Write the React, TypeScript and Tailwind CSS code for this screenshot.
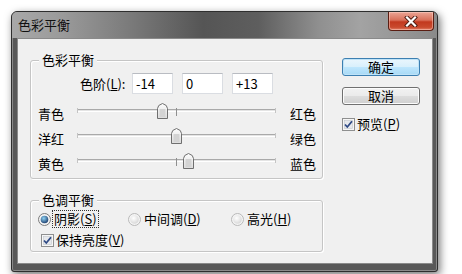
import React from "react";

const font = { fontFamily: '"Noto Sans CJK SC", "Noto Sans", sans-serif' };

interface SliderRowProps {
  left: string;
  right: string;
  value: number;
}

const SliderThumb = () => (
  <svg width="11" height="16" viewBox="0 0 11 16">
    <defs>
      <linearGradient id="thumbFill" x1="0" y1="0" x2="0" y2="1">
        <stop offset="0" stopColor="#fdfdfd" />
        <stop offset="1" stopColor="#dcdcdc" />
      </linearGradient>
    </defs>
    <path
      d="M0.5 15.5 V5.5 Q0.5 2 5.5 0.5 Q10.5 2 10.5 5.5 V15.5 Z"
      fill="url(#thumbFill)"
      stroke="#6f6f6f"
    />
    <rect x="2.5" y="6" width="6" height="8" fill="#d3d3d3" />
  </svg>
);

const SliderRow: React.FC<SliderRowProps> = ({ left, right, value }) => {
  const center = 99 + value * 0.94;
  return (
    <div className="flex h-[25px] items-center">
      <span className="w-[26px] whitespace-nowrap pt-[2px] text-[13px] leading-[16px]">{left}</span>
      <div className="relative ml-[13px] h-[25px] w-[199px]">
        <div className="absolute left-0 right-0 top-[9px] h-[3px] border-t border-b border-t-[#a9a9a9] border-b-white bg-[#e4e4e4]" />
        <div className="absolute left-0 top-[8px] h-[5px] w-px bg-[#c4c4c4]" />
        <div className="absolute right-0 top-[8px] h-[5px] w-px bg-[#c4c4c4]" />
        <div className="absolute left-[99px] top-[8px] h-[8px] w-px bg-[#8f8f8f]" />
        <div className="absolute top-[3px] flex" style={{ left: center - 5.5 }}>
          <SliderThumb />
        </div>
      </div>
      <span className="ml-[14px] w-[26px] whitespace-nowrap pt-[2px] text-[13px] leading-[16px]">{right}</span>
    </div>
  );
};

const Radio = ({ checked }: { checked: boolean }) => (
  <svg width="13" height="13" viewBox="0 0 13 13">
    <defs>
      <radialGradient id={checked ? "radOn" : "radOff"} cx="0.4" cy="0.35" r="0.7">
        <stop offset="0" stopColor={checked ? "#8fd3f5" : "#ffffff"} />
        <stop offset="1" stopColor={checked ? "#1a3a6a" : "#d6d6d6"} />
      </radialGradient>
    </defs>
    <circle cx="6.5" cy="6.5" r="6" fill="#f4f4f4" stroke={checked ? "#7c7c7c" : "#b8b8b8"} />
    <circle cx="6.5" cy="6.5" r={checked ? 3.8 : 4.3} fill={`url(#${checked ? "radOn" : "radOff"})`} />
  </svg>
);

const Check = () => (
  <svg width="13" height="13" viewBox="0 0 13 13">
    <rect x="0.5" y="0.5" width="12" height="12" fill="#f6f6f6" stroke="#8e8f8f" />
    <rect x="2.5" y="2.5" width="8" height="8" fill="#e6e8ec" stroke="#c2c6cc" strokeWidth="0.6" />
    <path d="M3 6.5 L5.3 9 L10 3.3" fill="none" stroke="#2f4a85" strokeWidth="1.8" />
  </svg>
);

const NumBox = ({ value }: { value: string }) => (
  <div className="flex h-[21px] w-[41px] items-center border border-[#dadde2] border-t-[#b9bcc2] bg-white pl-[3px] text-[13px] leading-[16px]">
    {value}
  </div>
);

export default function App() {
  return (
    <div className="min-h-screen bg-white pl-[11px] pt-[11px] text-black" style={font}>
      <div className="flex h-[261px] w-[427px] flex-col overflow-hidden rounded-t-[6px] rounded-b-[3px] border border-[#2e2e2e] bg-[#585858] shadow-[2px_3px_9px_rgba(0,0,0,0.55),inset_0_0_0_1px_rgba(255,255,255,0.3)]">
        {/* title bar */}
        <div className="flex h-[26px] shrink-0 justify-between bg-[linear-gradient(90deg,#a8a8a8_0%,#9a9a9a_12%,#7a7a7a_28%,#555555_45%,#5e5e5e_58%,#8f8f8f_72%,#a3a3a3_82%,#8a8a8a_100%)] pl-[6px] pr-[3px]">
          <span className="mt-[5px] text-[13px] leading-[16px] text-[#111]">色彩平衡</span>
          <div className="flex h-[19px] w-[46px] items-center justify-center rounded-b-[4px] border border-t-0 border-[#5a1d12] bg-[linear-gradient(180deg,#eba595_0%,#d9705a_45%,#c2391f_55%,#c94a2e_85%,#e3826a_100%)] shadow-[inset_0_0_0_1px_rgba(255,220,210,0.45)]">
            <svg width="14" height="11" viewBox="0 0 14 11">
              <path d="M3 1.5 L11 9.5 M11 1.5 L3 9.5" stroke="#4a1a10" strokeWidth="4" strokeLinecap="square" />
              <path d="M3 1.5 L11 9.5 M11 1.5 L3 9.5" stroke="#ffffff" strokeWidth="2.2" strokeLinecap="square" />
            </svg>
          </div>
        </div>

        {/* client area */}
        <div className="ml-[5px] mr-[4px] flex h-[226px] shrink-0 border border-[#8a8a8a] bg-[#f0f0f0]">
          <div className="flex flex-col pl-[12px]">
            {/* 色彩平衡 group */}
            <div className="relative mt-[21px] h-[119px] w-[293px] rounded-[3px] border border-[#c5c5c5] shadow-[inset_1px_1px_0_#ffffff,1px_1px_0_#ffffff]">
              <span className="absolute left-[8px] top-[-9px] whitespace-nowrap bg-[#f0f0f0] px-[3px] text-[13px] leading-[16px]">
                色彩平衡
              </span>
              <div className="mt-[12px] flex items-center pl-[49px]">
                <span className="w-[44px] whitespace-nowrap text-[13px] leading-[16px]">
                  色阶(<span className="underline">L</span>):
                </span>
                <div className="ml-[8px] flex gap-[9px]">
                  <NumBox value="-14" />
                  <NumBox value="0" />
                  <NumBox value="+13" />
                </div>
              </div>
              <div className="mt-[6px] flex flex-col pl-[7px]">
                <SliderRow left="青色" right="红色" value={-14} />
                <SliderRow left="洋红" right="绿色" value={0} />
                <SliderRow left="黄色" right="蓝色" value={13} />
              </div>
            </div>

            {/* 色调平衡 group */}
            <div className="relative mt-[21px] h-[52px] w-[293px] rounded-[3px] border border-[#c5c5c5] shadow-[inset_1px_1px_0_#ffffff,1px_1px_0_#ffffff]">
              <span className="absolute left-[8px] top-[-9px] whitespace-nowrap bg-[#f0f0f0] px-[3px] text-[13px] leading-[16px]">
                色调平衡
              </span>
              <div className="mt-[9px] flex h-[18px] items-center whitespace-nowrap pl-[7px] text-[13px] leading-[16px]">
                <div className="flex w-[90px] items-center">
                  <Radio checked />
                  <span className="ml-[2px] px-px outline outline-1 outline-dotted outline-[#333]">
                    阴影(<span className="underline">S</span>)
                  </span>
                </div>
                <div className="flex w-[103px] items-center">
                  <Radio checked={false} />
                  <span className="ml-[3px]">
                    中间调(<span className="underline">D</span>)
                  </span>
                </div>
                <div className="flex items-center">
                  <Radio checked={false} />
                  <span className="ml-[3px]">
                    高光(<span className="underline">H</span>)
                  </span>
                </div>
              </div>
              <div className="mt-[3px] flex h-[18px] items-center whitespace-nowrap pl-[10px] text-[13px] leading-[16px]">
                <Check />
                <span className="ml-[2px]">
                  保持亮度(<span className="underline">V</span>)
                </span>
              </div>
            </div>
          </div>

          {/* buttons */}
          <div className="ml-[19px] flex flex-col">
            <button className="mt-[19px] flex h-[18px] w-[78px] items-center justify-center rounded-[3px] border border-[#3c7fb1] bg-[linear-gradient(180deg,#eaf6fd_0%,#d9f0fc_48%,#bee6fd_52%,#a7d9f5_100%)] text-[13px] leading-[16px] shadow-[inset_0_0_0_1px_#bfe3f8]">
              确定
            </button>
            <button className="mt-[11px] flex h-[18px] w-[78px] items-center justify-center rounded-[3px] border border-[#707070] bg-[linear-gradient(180deg,#f2f2f2_0%,#ebebeb_48%,#dddddd_52%,#cfcfcf_100%)] text-[13px] leading-[16px] shadow-[inset_0_0_0_1px_#fcfcfc]">
              取消
            </button>
            <div className="mt-[11px] flex h-[16px] items-center whitespace-nowrap text-[13px] leading-[16px]">
              <Check />
              <span className="ml-[2px]">
                预览(<span className="underline">P</span>)
              </span>
            </div>
          </div>
        </div>
      </div>
    </div>
  );
}
